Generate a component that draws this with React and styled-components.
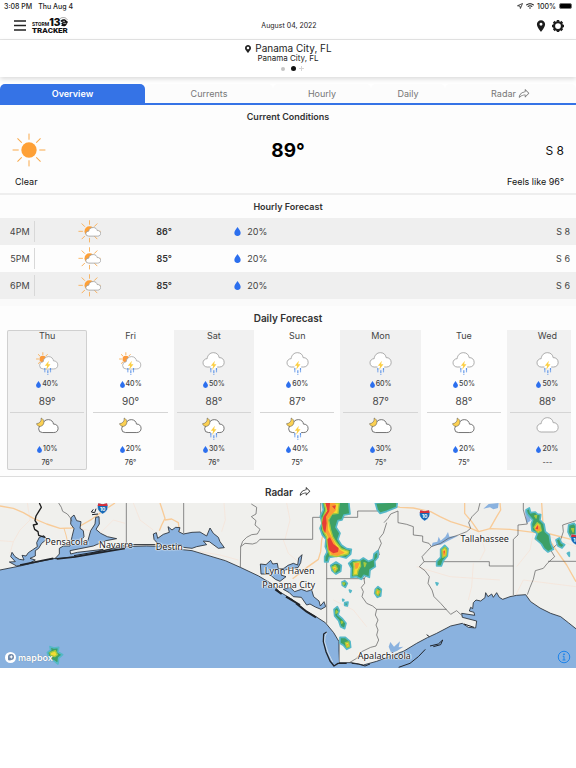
import React, { useState } from "react"
import styled, { createGlobalStyle } from "styled-components"
import { FaMapMarkerAlt, FaWifi } from "react-icons/fa"
import { MdLocationOn } from "react-icons/md"
import { PiShareFat } from "react-icons/pi"

const tabs = [
  { name: "Overview", size: 145 },
  { name: "Currents", size: 128 },
  { name: "Hourly", size: 98 },
  { name: "Daily", size: 74 },
  { name: "Radar", size: 131, share: true },
]

const hours = [
  { time: "4PM", temp: 86, rain: 20, wind: "S 8" },
  { time: "5PM", temp: 85, rain: 20, wind: "S 6" },
  { time: "6PM", temp: 85, rain: 20, wind: "S 6" },
]

const days = [
  { day: "Thu", icon: "sunStorm", rain: 40, high: "89°", night: "moon", nightRain: 10, low: "76°" },
  { day: "Fri", icon: "sunStorm", rain: 40, high: "90°", night: "moon", nightRain: 20, low: "76°" },
  { day: "Sat", icon: "storm", rain: 50, high: "88°", night: "moonStorm", nightRain: 30, low: "76°" },
  { day: "Sun", icon: "storm", rain: 60, high: "87°", night: "moonStorm", nightRain: 40, low: "75°" },
  { day: "Mon", icon: "storm", rain: 60, high: "87°", night: "moon", nightRain: 30, low: "75°" },
  { day: "Tue", icon: "storm", rain: 50, high: "88°", night: "moon", nightRain: 20, low: "75°" },
  { day: "Wed", icon: "storm", rain: 50, high: "88°", night: "cloud", nightRain: 20, low: "---" },
]

// label centres, in the units of the map drawing
const cities = [
  { name: "Pensacola", x: 200, y: 127 },
  { name: "Navarre", x: 348, y: 136 },
  { name: "Destin", x: 508, y: 140 },
  { name: "Lynn Haven", x: 869, y: 214 },
  { name: "Panama City", x: 866, y: 256 },
  { name: "Tallahassee", x: 1454, y: 118 },
  { name: "Apalachicola", x: 1153, y: 469 },
]

const App = () => {
  const [tab, setTab] = useState("Overview")
  return (
    <>
      <GlobalStyle />
      <StatusBar>
        <StatusGroup $gap={6}>
          <span>3:08 PM</span>
          <span>Thu Aug 4</span>
        </StatusGroup>
        <StatusGroup $gap={3}>
          <svg width="6" height="6" viewBox="0 0 12 12">
            <path d="M11 1 1 5.5l5 .7L6.8 11z" fill="none" stroke="#222" strokeWidth="1.6" />
          </svg>
          <FaWifi size={8} />
          <span>100%</span>
          <Battery />
        </StatusGroup>
      </StatusBar>

      <Header>
        <HeaderSide>
          <IconButton aria-label="Menu">
            <svg width="12" height="11" viewBox="0 0 12 11">
              <path d="M0 1h12M0 5.500h12M0 10h12" stroke="#222" strokeWidth="1.700" />
            </svg>
          </IconButton>
          <Logo />
        </HeaderSide>
        <HeaderDate>August 04, 2022</HeaderDate>
        <HeaderSide $end>
          <IconButton aria-label="Locations">
            <MdLocationOn size={14} />
          </IconButton>
          <IconButton aria-label="Settings">
            <Gear />
          </IconButton>
        </HeaderSide>
      </Header>

      <Place>
        <PlaceName>
          <FaMapMarkerAlt size={8} />
          Panama City, FL
        </PlaceName>
        <PlaceDetail>Panama City, FL</PlaceDetail>
        <Dots>
          <Dot />
          <Dot $active />
          <svg width="5" height="5" viewBox="0 0 5 5">
            <path d="M2.500 0v5M0 2.500h5" stroke="#d5d5d5" />
          </svg>
        </Dots>
      </Place>

      <Tabs role="tablist">
        {tabs.map((t) => (
          <Tab
            key={t.name}
            role="tab"
            aria-selected={tab === t.name}
            $active={tab === t.name}
            $size={t.size}
            onClick={() => setTab(t.name)}
          >
            {t.name}
            {t.share && <PiShareFat size={12} />}
          </Tab>
        ))}
      </Tabs>

      <Current>
        <Title $small>Current Conditions</Title>
        <CurrentRow>
          <Sun />
          <BigTemp>89°</BigTemp>
          <Wind>S 8</Wind>
        </CurrentRow>
        <CurrentNotes>
          <span>Clear</span>
          <span>Feels like 96°</span>
        </CurrentNotes>
      </Current>

      <Hourly>
        <Title $small>Hourly Forecast</Title>
        <HourTable>
          <tbody>
            {hours.map((h) => (
              <HourRow key={h.time}>
                <TimeCell scope="row">
                  <Time>{h.time}</Time>
                </TimeCell>
                <IconCell>
                  <WeatherIcon name="partly" />
                </IconCell>
                <TempCell>{h.temp}°</TempCell>
                <RainCell>
                  <Rain>
                    <Drop size={9} />
                    {h.rain}%
                  </Rain>
                </RainCell>
                <WindCell>{h.wind}</WindCell>
              </HourRow>
            ))}
          </tbody>
        </HourTable>
      </Hourly>

      <Daily>
        <Title>Daily Forecast</Title>
        <Days>
          {days.map((d, i) => (
            <Day key={d.day} $shaded={i % 2 === 0} $active={i === 0}>
              <Half $first>
                <DayName>{d.day}</DayName>
                <WeatherIcon name={d.icon} />
                <DayRain>
                  <Drop size={7} />
                  {d.rain}%
                </DayRain>
                <High>{d.high}</High>
              </Half>
              <Half>
                <WeatherIcon name={d.night} />
                <DayRain>
                  <Drop size={7} />
                  {d.nightRain}%
                </DayRain>
                <Low>{d.low}</Low>
              </Half>
            </Day>
          ))}
        </Days>
      </Daily>

      <section>
        <RadarTitle>
          Radar <PiShareFat size={12} />
        </RadarTitle>
        <MapFrame>
          <RadarMap />
          {cities.map((c) => (
            <City key={c.name} style={{ left: `${(c.x / 1728) * 100}%`, top: `${((c.y - 9) / 495) * 100}%` }}>
              {c.name}
            </City>
          ))}
          <MapLogo href="#mapbox">
            <svg width="11" height="11" viewBox="0 0 22 22">
              <circle cx="11" cy="11" r="11" fill="#fff" />
              <circle cx="12" cy="10" r="6" fill="#6d86a6" />
              <path d="M6 10c0 3 0 5 .5 6.500C9 17 11 17 13 16z" fill="#6d86a6" />
              <path d="m12.500 5.500 1.300 3 3 1.300-3 1.300-1.300 3-1.300-3-3-1.300 3-1.300z" fill="#fff" />
            </svg>
            mapbox
          </MapLogo>
          <InfoButton aria-label="Map information">
            <svg width="14" height="14" viewBox="0 0 28 28" fill="none" stroke="#1f84ea" strokeWidth="2">
              <circle cx="14" cy="14" r="11.500" />
              <path d="M11.500 12.500H14V20m-3 0h6" />
              <circle cx="14" cy="8.500" r="1" fill="#1f84ea" />
            </svg>
          </InfoButton>
        </MapFrame>
      </section>
    </>
  )
}

export default App

const Logo = () => (
  <LogoBox>
    <LogoTop>
      <LogoStorm>STORM</LogoStorm>
      <LogoNumber>13</LogoNumber>
      <svg width="8" height="10" viewBox="0 0 24 30">
        <path d="M0 5C8-1 19 1 22 9" fill="none" stroke="#555" strokeWidth="1.500" />
        <path d="M1 12C6 5 17 5 20 12l4 2-3 6c-2 8-13 10-18 5l4-3-5-2 6-3z" fill="#111" />
        <path d="M8 13h7M10 19h9" stroke="#fff" strokeWidth="2" />
      </svg>
    </LogoTop>
    <LogoTracker>TRACKER</LogoTracker>
  </LogoBox>
)

const Gear = () => (
  <svg width="12" height="12" viewBox="0 0 24 24" fill="none" stroke="#1c1c1c">
    <circle cx="12" cy="12" r="8" strokeWidth="4.500" />
    {[0, 45, 90, 135, 180, 225, 270, 315].map((a) => (
      <path key={a} d="M12 0v3" strokeWidth="5" transform={`rotate(${a} 12 12)`} />
    ))}
  </svg>
)

const Rays = ({ cx, cy, from, to, width }) =>
  [0, 45, 90, 135, 180, 225, 270, 315].map((a) => (
    <path
      key={a}
      d={`M${cx} ${cy - from}V${cy - to}`}
      stroke="#f9a94b"
      strokeWidth={width}
      strokeLinecap="round"
      transform={`rotate(${a} ${cx} ${cy})`}
    />
  ))

const Sun = () => (
  <svg width="34" height="34" viewBox="0 0 102 102">
    <circle cx="51" cy="51" r="23" fill="#fea036" />
    <Rays cx={51} cy={51} from={32} to={48} width={3} />
  </svg>
)

const Drop = ({ size }) => (
  <svg width={size - 2} height={size} viewBox="0 0 14 20">
    <path d="M7 0C9 4 14 8 14 13a7 7 0 0 1-14 0C0 8 5 4 7 0z" fill="#2c6fee" />
  </svg>
)

const cloud = "M14 44A12.500 12.500 0 0 1 14 19C15 8 23 1 33 1S49 8 50 16C58 15 65 21 65 30S59 44 51 44Z"

const Cloud = ({ place, color = "#9b9b9b", width = 2.5 }) => (
  <path d={cloud} fill="#fff" stroke={color} strokeWidth={width} transform={place} />
)

const Storm = () => (
  <>
    <path d="M24 40h20v8H24z" fill="#fff" />
    <path d="M37 25 25 40h7l-3 12 13-16h-7z" fill="#fccf45" />
    <path d="M25 47v13M34 54v13M42 47v13" stroke="#6096e8" strokeWidth="3.500" strokeDasharray="8 2 3" />
  </>
)

const WeatherIcon = ({ name }) => (
  <WeatherSvg viewBox="-1 -1 68 69" aria-hidden="true">
    {name === "partly" && (
      <>
        <circle cx="33" cy="33" r="15" fill="#fea036" />
        <Rays cx={33} cy={33} from={21} to={32} width={2.5} />
        <Cloud place="translate(21 21) scale(.7 .6)" width={3.5} />
      </>
    )}
    {name === "sunStorm" && (
      <>
        <circle cx="19" cy="20" r="10" fill="#fb9a3c" />
        <Rays cx={19} cy={20} from={13} to={19} width={2.5} />
        <Cloud place="translate(8 12) scale(.86)" />
        <Storm />
      </>
    )}
    {name === "storm" && (
      <>
        <Cloud />
        <Storm />
      </>
    )}
    {name === "cloud" && <Cloud />}
    {(name === "moon" || name === "moonStorm") && (
      <>
        <Cloud place="translate(5 6) scale(.92 .9)" color="#666" width={3} />
        {name === "moonStorm" && <Storm />}
        <path d="M14 2C15 12 10 18 0 19c3 9 13 11 19 4C24 17 24 7 14 2z" fill="#fbd052" stroke="#555" strokeWidth="1.500" />
      </>
    )}
  </WeatherSvg>
)

const Shield = ({ x, y }) => (
  <g transform={`translate(${x} ${y})`}>
    <path d="M-13-15Q0-10 13-15 22 6 0 17-22 6-13-15z" fill="#1769b5" stroke="#fff" strokeWidth="1.500" />
    <path d="M-13-15Q0-10 13-15L15-7H-15z" fill="#d6303a" />
    <text y="9" textAnchor="middle" fill="#fff" fontSize="15" fontWeight="700">
      10
    </text>
  </g>
)

const RadarMap = () => (
  <MapSvg viewBox="0 9 1728 495" preserveAspectRatio="xMidYMid slice">
    <rect y="9" width="1728" height="495" fill="#f0f0ed" />

    {/* small roads */}
    <g fill="none" stroke="#f5e4da" strokeWidth="2.500">
      <path d="M0 122 40 125 60 90 90 60 82 9M40 125 30 160M240 85 300 100 340 60 375 70M400 9 420 60 460 90M672 9 676 60 665 95M600 155 660 165 715 180M860 9 870 60 855 118M850 120 865 160 900 190M1000 300 1060 330 1100 380M1250 200 1350 230 1500 240M1420 190 1415 260 1405 300M1440 100 1455 150 1440 180M1600 100 1590 150 1550 200M1540 300 1570 240 1728 260M1650 110 1728 140" />
    </g>
    <g fill="none" stroke="#f8cb98" strokeWidth="4" strokeLinejoin="round">
      <path d="M0 18 40 25 70 38 100 55 140 72 180 85 215 84 240 78 275 58 310 32 345 9" />
      <path d="M192 85 198 105 202 122" strokeWidth="3" />
      <path d="M480 9 487 30 495 55 485 75 478 92M495 60 515 57 535 68 538 95 546 130" />
      <path d="M878 236 920 203 955 178 962 155 965 120 970 100 972 9" />
      <path d="M1152 10 1200 22 1240 24 1292 35 1320 50 1352 65 1400 80 1436 95 1470 86 1530 88 1600 97 1650 102 1728 122" />
      <path d="M1394 9 1394 40 1415 65 1436 95M1470 85 1490 50 1502 30 1500 9M1625 9 1630 90 1665 145 1700 195 1728 245M1605 120 1632 90" />
    </g>

    {/* water */}
    <g fill="#8ab2df" stroke="#252b33" strokeWidth="2.500" strokeLinejoin="round">
      <path d="M-5 211 60 198 130 182 165 175 230 169 300 154 370 140 440 138 500 140 548 149 576 152 636 170 676 182 721 202 776 228 816 252 838 275 876 298 921 335 951 352 976 368 1001 398 1017 425 1017 488 1056 488 1090 495 1130 484 1178 466 1212 453 1250 430 1282 413 1310 400 1352 378 1387 370 1405 382 1427 384 1430 363 1387 352 1385 340 1424 346 1422 337 1408 333 1412 322 1418 326 1420 308 1428 300 1442 303 1455 293 1457 278 1464 290 1475 282 1480 292 1490 278 1498 292 1508 298 1530 290 1550 286 1577 284 1592 305 1620 324 1652 340 1682 350 1705 368 1735 392 1735 520-5 520Z" />
      <path d="M50 198 28 186 46 185 32 170 36 157 45 170 58 178 72 180 66 166 78 168 85 158 97 150 112 140 110 128 118 112 132 107 140 118 125 130 116 145 106 152 106 168 90 175 106 180 84 192Z" />
      <path d="M165 176 178 162 178 145 190 138 210 138 216 110 222 86 212 72 213 53 222 45 230 62 243 65 240 85 250 92 252 110 243 122 262 128 272 92 285 72 287 52 297 50 298 72 288 88 302 100 322 110 350 116 318 122 280 138 240 146 210 152 212 162 232 157 310 148 270 162 225 170Z" />
      <path d="M462 118 460 102 469 98 473 115 490 103 508 97 504 80 516 90 527 82 540 83 536 95 550 102 576 97 600 96 620 108 630 84 640 100 655 112 660 125 673 143 655 145 628 125 610 123 620 134 590 140 576 145 550 142 545 135 480 138Z" />
      <path d="M783 222 781 192 798 194 812 181 818 192 832 190 835 207 852 205 864 196 880 190 893 195 896 174 906 164 902 188 894 203 872 205 850 212 843 225 858 230 840 244 826 238 808 222Z" />
      <path d="M850 268 870 262 884 275 904 268 920 274 935 270 941 290 957 303 961 318 972 305 977 320 963 328 946 321 930 312 920 315 904 292 880 290 868 278Z" />
      <path d="M1014 452 1017 488 1004 492 990 480 980 450 978 425Z" stroke="none" />
    </g>
    <g fill="#8ab2df">
      <path d="M1171 426 1182 440 1200 424 1196 442 1210 440 1192 452 1174 460 1166 440Z" />
      <path d="M1294 140 1298 128 1312 125 1316 110 1322 122 1336 110 1344 96 1348 110 1375 107 1345 122 1322 134 1305 136Z" />
      <path d="M1450 26 1466 12 1496 9 1494 24 1480 28 1470 22ZM1574 30 1590 45 1592 62 1580 70Z" />
    </g>

    {/* barrier islands */}
    <g fill="none" stroke="#20242a" strokeLinejoin="round">
      <path d="M60 195 130 181 160 175M170 177 225 171 300 158 375 145" strokeWidth="5" />
      <path d="M222 167 310 152 380 134 467 134" strokeWidth="3" />
      <path d="M826 268 845 282M858 290 900 315M888 310 920 335 948 352" strokeWidth="6" />
      <path d="M980 396 971 402 970 425 978 455 990 483 1002 498 1014 490 1040 490" strokeWidth="4" />
      <path d="M980 398 975 410 974 425 984 457 998 486" stroke="#f0f0ed" strokeWidth="2" />
      <path d="M1055 490 1075 492 1095 498 1110 492M1196 502 1230 490 1255 470 1276 448M1290 438 1315 432 1328 420 1322 434 1300 440M1392 372 1422 382" strokeWidth="3" />
      <path d="m280 28-6 8 10 2m-8 6 18-2m-6-16-4 12M1280 404l8 6" strokeWidth="3" />
    </g>

    {/* county and state lines */}
    <g fill="none" stroke="#555" strokeWidth="2" strokeLinejoin="round">
      <path
        d="M118 9 124 22 116 35 108 48 105 62 112 72 100 75 104 88 114 95 116 106 135 112"
        stroke="#1d1d1d"
        strokeWidth="4"
      />
      <path d="M176 9 184 22 188 34 202 42 210 52 216 64M379 9V132M551 9V100" />
      <path d="M754 12 770 22 768 42 754 50 768 62 765 75 780 88 772 102 755 104 740 112 728 124 722 140 721 202M722 140 735 130 758 132 770 128 780 118H938V52H1073V33H1152M962 9V52M980 52V370M980 236H1095" />
      <path d="M1160 68 1150 100 1138 115 1144 130 1135 150 1138 165 1124 178 1120 200 1108 215 1092 236 1094 250 1084 262 1090 275 1086 290 1100 310 1118 318 1130 328 1126 345 1134 360 1128 375 1134 390 1130 405 1136 420 1128 438 1112 442 1085 455 1070 475 1048 488M1130 328H1340" />
      <path d="M1152 68 1164 55 1172 42 1194 33V68L1220 73 1240 80V105L1268 108V125L1287 130 1294 140 1280 155 1266 170 1272 185 1258 200 1275 212 1288 230 1284 250 1296 270 1302 290 1322 310 1338 328 1352 343 1370 332 1385 346M1272 185H1468V198H1540M1540 285V118L1554 105V75L1582 72 1570 30V9" />
      <path d="M1294 140 1322 130 1345 115 1375 105 1400 95 1412 85 1406 68 1416 50 1434 32 1440 9M1582 284 1590 262 1600 238 1606 212 1630 205 1642 190 1664 170 1652 150 1680 125 1690 95 1688 75 1728 62M1644 184H1728" />
    </g>

    {/* radar echoes, weak to strong */}
    <g fill="#3da066" stroke="#55b8c8" strokeWidth="5" strokeLinejoin="round">
      <path d="M966 5 970 30 961 48 966 70 960 85 967 105 978 118 976 140 982 155 974 170 974 186 984 186 988 172 1015 168 1038 174 1052 162 1054 148 1040 146 1024 135 1014 118 1020 100 1008 82 1014 62 1026 60 1032 45 1050 42 1046 5Z" />
      <path d="M992 196 1008 186 1024 196 1022 214 1008 222 996 212Z" />
      <path d="M1053 232 1054 205 1046 190 1058 180 1078 182 1090 174 1106 184 1120 178 1122 162 1134 152 1134 172 1124 184 1126 200 1110 210 1108 232 1092 226 1084 238 1070 230Z" />
      <path d="M1126 9 1132 30 1140 40 1160 34 1190 22 1192 5Z" />
      <path d="M1026 246 1034 242 1042 250 1036 262 1027 256ZM1034 308 1044 306 1042 318 1034 316ZM1048 270l6 2-3 5zM1028 298l4 2-3 3z" />
      <path d="M1002 328 1012 320 1018 332 1014 345 1026 355 1038 370 1034 386 1022 380 1016 362 1004 348Z" />
      <path d="M1020 412 1036 412 1050 424 1052 442 1040 448 1030 436 1020 430Z" />
      <path d="M1126 268 1134 260 1144 268 1142 288 1132 292 1124 280Z" />
      <path d="M1322 148 1334 136 1344 146 1342 168 1330 182 1324 198 1310 198 1310 184 1322 172Z" />
      <path d="M1308 248l6 2-3 5zM1702 160l6-3v12z" />
      <path d="M1578 30 1588 24 1592 38 1606 36 1612 42 1622 44 1620 60 1632 72 1636 95 1648 105 1652 130 1660 148 1644 156 1632 146 1624 132 1606 116 1612 100 1596 92 1594 72 1598 60 1582 42Z" />
      <path d="M1668 120 1678 114 1684 128 1694 134 1686 144 1674 138ZM1706 75 1722 70 1728 78V105L1712 112 1704 96Z" />
      <path d="M142 458 152 450 150 440 162 444 176 442 174 456 188 464 176 474 174 492 164 484 150 478Z" />
    </g>
    <g fill="#f4dc32" stroke="#a3c940" strokeWidth="4" strokeLinejoin="round">
      <path d="M972 9 978 30 966 60 968 90 980 112 984 150 990 166 1010 170 1044 162 1046 154 1024 146 1008 126 998 110 992 90 986 60 996 42 1014 40 1018 9Z" />
      <path d="M996 202 1006 196 1012 206 1004 216ZM1060 225 1062 200 1060 188 1080 184 1082 198 1074 212 1072 224ZM1092 188l6 2-4 10zM1028 249l6 0-3 6zM1009 332l4 4-5 4zM1024 364l4 2-3 4zM1036 428 1046 426 1048 440 1040 442ZM1130 268 1140 274 1134 286 1128 280Z" />
      <path d="M1326 150 1336 142 1340 152 1338 168 1328 172ZM1604 48 1610 46 1608 54ZM1602 82 1612 68 1620 74 1624 92 1614 98ZM1715 86l6 0-2 10zM150 458 166 452 172 464 164 470 152 466Z" />
    </g>
    <g fill="#fb9d34">
      <path d="M980 9 984 34 970 62 974 92 984 110 986 148 994 164 1012 168 1034 158 1012 144 998 116 984 90 984 56 1008 30 1006 9Z" />
      <path d="M1064 190 1078 188 1074 204 1066 208ZM1001 204l6 0-3 8zM1132 272l6 2-4 8zM1328 154 1336 148 1336 166 1330 168ZM1604 88 1612 72 1620 80 1622 92 1610 94ZM1040 432l5 0-3 8z" />
    </g>
    <g fill="#e63e35">
      <path d="M976 9 990 9 988 34 978 50 980 70 976 100 970 90 966 70 970 50 982 32ZM982 118 990 112 1000 132 1016 144 1014 156 1000 160 986 150ZM996 18 1008 16 1004 28ZM1606 86 1614 76 1614 88ZM1331 154l4 0-3 8z" />
    </g>

    <Shield x={308} y={25} />
    <Shield x={1274} y={46} />
    <Shield x={1728} y={118} />
  </MapSvg>
)

const GlobalStyle = createGlobalStyle`
  * {
    box-sizing: border-box;
  }
  body {
    margin: 0;
    background: #fff;
    color: #222;
    font-family: Inter, "Liberation Sans", sans-serif;
  }
  button {
    font-family: inherit;
    border: 0;
    padding: 0;
    background: none;
    color: inherit;
    cursor: pointer;
  }
  svg {
    display: block;
    flex: none;
  }
`

const StatusBar = styled.div`
  display: flex;
  justify-content: space-between;
  align-items: center;
  height: 12px;
  padding: 0 4px;
  font-size: 7px;
  font-weight: 500;
`

const StatusGroup = styled.div`
  display: flex;
  align-items: center;
  gap: ${(p) => p.$gap}px;
`

const Battery = styled.span`
  width: 13px;
  height: 6px;
  border-radius: 2px;
  background: #000;
  border: 1px solid #777;
`

const Header = styled.header`
  display: grid;
  grid-template-columns: 1fr auto 1fr;
  align-items: center;
  height: 28px;
  padding: 0 12px 0 14px;
  border-bottom: 1px solid #e6e6e6;
`

const HeaderSide = styled.div`
  display: flex;
  align-items: center;
  justify-content: ${(p) => (p.$end ? "flex-end" : "flex-start")};
  gap: ${(p) => (p.$end ? 4 : 6)}px;
`

const HeaderDate = styled.time`
  font-size: 7px;
`

const IconButton = styled.button`
  display: flex;
  color: #1c1c1c;
`

const LogoBox = styled.div`
  display: flex;
  flex-direction: column;
  color: #111;
  font-family: Roboto, sans-serif;
  font-weight: 900;
`

const LogoTop = styled.div`
  display: flex;
  align-items: flex-end;
  height: 10px;
`

const LogoStorm = styled.span`
  font-size: 5px;
  line-height: 6px;
  font-weight: 700;
`

const LogoNumber = styled.span`
  font-family: Inter, sans-serif;
  font-size: 10px;
  line-height: 10px;
`

const LogoTracker = styled.span`
  font-size: 8px;
  line-height: 8px;
`

const Place = styled.section`
  display: flex;
  flex-direction: column;
  align-items: center;
  height: 37px;
  padding-top: 3px;
  box-shadow: 0 2px 5px rgba(0, 0, 0, 0.15);
`

const PlaceName = styled.h1`
  display: flex;
  align-items: center;
  gap: 3px;
  margin: 0;
  font-size: 10px;
  line-height: 11px;
  font-weight: 400;
`

const PlaceDetail = styled.div`
  font-size: 8px;
  line-height: 8px;
`

const Dots = styled.div`
  display: flex;
  align-items: center;
  gap: 3px;
  margin-top: 4px;
  padding-left: 8px;
`

const Dot = styled.span`
  width: ${(p) => (p.$active ? 5 : 4)}px;
  height: ${(p) => (p.$active ? 5 : 4)}px;
  margin-right: ${(p) => (p.$active ? 0 : 3)}px;
  border-radius: 50%;
  background: ${(p) => (p.$active ? "#111" : "#c4c4c4")};
`

const Tabs = styled.div`
  display: flex;
  margin-top: 7px;
  border-bottom: 2px solid #3573e6;
`

const Tab = styled.button`
  display: flex;
  align-items: center;
  justify-content: center;
  gap: 2px;
  flex: ${(p) => p.$size} 1 0;
  height: 19px;
  border-radius: 5px 5px 0 0;
  && {
    background: ${(p) => (p.$active ? "#3573e6" : "#fcfcfc")};
    color: ${(p) => (p.$active ? "#fff" : "#777")};
  }
  font-size: 9px;
  font-weight: ${(p) => (p.$active ? 600 : 400)};
`

const Title = styled.h2`
  display: flex;
  align-items: center;
  justify-content: center;
  gap: 6px;
  height: 23px;
  margin: 0;
  font-size: ${(p) => (p.$small ? 9 : 10)}px;
  font-weight: 600;
  color: #333;
`

const Current = styled.section`
  background: #fdfdfd;
  border-bottom: 2px solid #eee;
`

const CurrentRow = styled.div`
  display: grid;
  grid-template-columns: 1fr auto 1fr;
  align-items: center;
  height: 44px;
  padding: 0 12px;
`

const BigTemp = styled.strong`
  font-size: 19px;
  font-weight: 700;
  color: #000;
`

const Wind = styled.span`
  justify-self: end;
  font-size: 12px;
  color: #111;
`

const CurrentNotes = styled.div`
  display: flex;
  justify-content: space-between;
  padding: 3px 12px 5px 15px;
  font-size: 9px;
  line-height: 13px;
  color: #111;
`

const Hourly = styled.section`
  background: #fdfdfd;
`

const HourTable = styled.table`
  width: 100%;
  table-layout: fixed;
  border-collapse: collapse;
  font-size: 9px;
  color: #444;
`

const HourRow = styled.tr`
  height: 27px;
  background: #fdfdfd;
  &:nth-child(odd) {
    background: #efefef;
  }
`

const TimeCell = styled.th`
  width: 6%;
  padding: 0;
  font-weight: 400;
`

const Time = styled.div`
  padding-right: 4px;
  border-right: 1px solid #d8d8d8;
  line-height: 21px;
  text-align: right;
`

const IconCell = styled.td`
  width: 19%;
  padding: 0;
`

const TempCell = styled.td`
  width: 7%;
  padding: 0;
  text-align: center;
  font-weight: 600;
  color: #333;
`

const RainCell = styled.td`
  padding: 0 0 0 50px;
`

const WindCell = styled.td`
  padding: 0 6px 0 0;
  text-align: right;
`

const Rain = styled.div`
  display: flex;
  align-items: center;
  gap: 6px;
`

const WeatherSvg = styled.svg`
  width: 23px;
  height: 23px;
  margin: 0 auto;
  fill: none;
`

const Daily = styled.section`
  padding-bottom: 6px;
  background: #fdfdfd;
  border-top: 7px solid #fafafa;
  border-bottom: 1px solid #ddd;
`

const Days = styled.div`
  display: flex;
  gap: 3px;
  margin: 0 5px 0 7px;
  padding-top: 1px;
  overflow: hidden;
`

const Day = styled.article`
  flex: 0 0 14.25%;
  padding: 0 3px;
  border-radius: ${(p) => (p.$active ? 2 : 0)}px;
  background: ${(p) => (p.$shaded ? "#f1f1f1" : "#fdfdfd")};
  box-shadow: ${(p) => (p.$active ? "inset 0 0 0 1px #d0d0d0" : "none")};
  color: #444;
`

const Half = styled.div`
  display: flex;
  flex-direction: column;
  align-items: center;
  height: ${(p) => (p.$first ? 83 : 57)}px;
  padding-top: ${(p) => (p.$first ? 0 : 4)}px;
  border-bottom: ${(p) => (p.$first ? "1px solid #d5d5d5" : "none")};
`

const DayName = styled.h3`
  margin: 0 0 10px;
  font-size: 9px;
  line-height: 12px;
  font-weight: 400;
`

const DayRain = styled.div`
  display: flex;
  align-items: center;
  gap: 1px;
  margin-top: 3px;
  font-size: 7px;
  font-weight: 500;
  line-height: 12px;
`

const High = styled.div`
  margin-top: 4px;
  font-size: 10px;
  line-height: 14px;
`

const Low = styled.div`
  margin-top: 2px;
  font-size: 7px;
  font-weight: 500;
  line-height: 12px;
`

const RadarTitle = styled(Title)`
  height: 26px;
  padding-top: 4px;
`

const MapFrame = styled.div`
  position: relative;
  overflow: hidden;
`

const MapSvg = styled.svg`
  width: 100%;
  height: auto;
`

const City = styled.span`
  position: absolute;
  transform: translate(-50%, -50%);
  font-family: "Noto Sans", sans-serif;
  font-size: 9px;
  line-height: 12px;
  white-space: nowrap;
  color: #222;
  text-shadow: 0 0 1px #fff, 0 0 2px #fff, 1px 0 1px #fff, -1px 0 1px #fff;
`

const MapLogo = styled.a`
  position: absolute;
  left: 5px;
  bottom: 5px;
  display: flex;
  align-items: center;
  gap: 2px;
  color: #fff;
  font-size: 9px;
  line-height: 11px;
  font-weight: 600;
  text-decoration: none;
  text-shadow: 0 0 1px #5b7391;
`

const InfoButton = styled.button`
  position: absolute;
  right: 5px;
  bottom: 4px;
`
